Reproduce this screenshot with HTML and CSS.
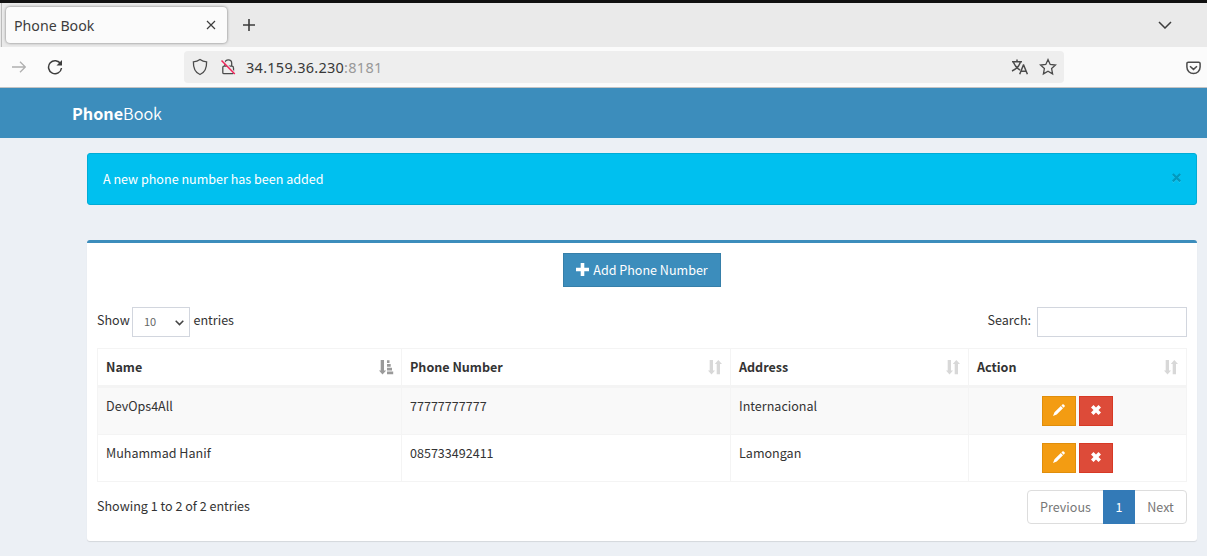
FILE: index.html
```html
<!DOCTYPE html>
<html lang="en">
<head>
<meta charset="utf-8">
<title>Phone Book</title>
<link rel="stylesheet" href="styles.css">
</head>
<body>
<svg class="defs" width="0" height="0" aria-hidden="true">
  <symbol id="sort" viewBox="0 0 14 15"><path d="M1.700 0h3.300v10.500h2L3.500 14.500 0 10.500h1.700zM8.700 14.300h3.300V4h2L10.300 0 6.800 4h1.900z"/></symbol>
  <symbol id="sort-asc" viewBox="0 0 15 15"><path d="M1.700 0h3.300v10.500h2.200L3.500 14.500 0 10.500h1.700zM8 .2h2.500v2.700H8zM8 4h3.700v2.700H8zM8 7.700h5v2.800H8zM8 11.400h6.200v2.800H8z"/></symbol>
  <symbol id="pencil" viewBox="0 0 12 12"><path d="M9.300.5q.8-.6 1.500.1l.7.700q.6.700 0 1.500l-.9.900-2.200-2.200zM7.800 2.100 10 4.300 3.700 10.500 0 12l1.500-3.700z"/></symbol>
  <symbol id="remove" viewBox="0 0 10 10"><path d="M2.500 0 5 2.500 7.500 0 10 2.500 7.500 5 10 7.500 7.500 10 5 7.500 2.500 10 0 7.500 2.500 5 0 2.500z"/></symbol>
</svg>
<div class="window-edge"></div>
<div class="tabs">
  <div class="tab"><span>Phone Book</span>
    <svg class="tab-close" width="10" height="10" viewBox="0 0 10 10"><path d="M1 1l8 8M9 1l-8 8"/></svg>
  </div>
  <svg class="new-tab" width="12" height="12" viewBox="0 0 12 12"><path d="M6 0v12M0 6h12"/></svg>
  <svg class="tab-list" width="14" height="8" viewBox="0 0 14 8"><path d="M1 1l6 6 6-6"/></svg>
</div>
<div class="toolbar">
  <svg class="forward" width="14" height="12" viewBox="0 0 14 12"><path d="M0 6h13M8 .7 13.300 6 8 11.300"/></svg>
  <svg class="reload" width="16" height="16" viewBox="0 0 16 16"><path d="M13.700 5A6.500 6.500 0 1 0 14.500 9"/><path class="solid" d="M15 1v5.500H9.500z"/></svg>
  <div class="address">
    <svg class="shield" width="16" height="18" viewBox="0 0 16 18"><path d="M8 1.500c2 1.500 4.300 2.200 6.600 2.300C14.800 9.500 13 14.500 8 16.500 3 14.500 1.200 9.500 1.400 3.800 3.700 3.700 6 3 8 1.500z"/></svg>
    <svg class="lock" width="16" height="18" viewBox="0 0 16 18"><path d="M4.900 8V5.200a3.400 3.400 0 0 1 6.800 0v3M4 8.200h7.700q1.800 0 1.800 1.800v4.500q0 1.200-1.200 1.200H4q-1.200 0-1.200-1.200v-5q0-1.300 1.200-1.300z"/><path class="slash-gap" d="M2.500 2.500 15.500 16"/><path class="slash" d="M1.500 2.500 14.800 16"/></svg>
    <span class="url">34.159.36.230<span>:8181</span></span>
    <svg class="translate" width="17" height="16" viewBox="0 0 17 16"><path d="M1 2.800h10M6 .5v2.300M2.500 3.500C4 7 6.500 9.500 9 11M9.300 3.500C8 7.500 5 10.300 1 12M8.700 15.200 12.400 6h.2l3.800 9.200M10 12.200h5.200"/></svg>
    <svg class="star" width="18" height="18" viewBox="0 0 18 18"><path d="M9 1.600 11.200 6.400 16.500 7 12.600 10.600 13.600 15.900 9 13.300 4.400 15.900 5.400 10.600 1.500 7 6.800 6.400z"/></svg>
  </div>
  <svg class="pocket" width="15" height="14" viewBox="0 0 15 14"><path d="M2.300 1.200h10.400q1.400 0 1.400 1.400V6a6.600 6.600 0 0 1-13.200 0V2.600q0-1.400 1.400-1.400zM4 5.200l3.500 3.200L11 5.200"/></svg>
</div>
<header class="navbar"><span class="brand"><b>Phone</b><span>Book</span></span></header>
<main class="content">
  <div class="alert"><span>A new phone number has been added</span>
    <svg class="dismiss" width="9" height="10" viewBox="0 0 9 10"><path class="glow" d="M.8 2l7.400 7.400M8.200 2 .8 9.400"/><path d="M.8 1l7.400 7.400M8.200 1 .8 8.400"/></svg>
  </div>
  <section class="box">
    <button class="add"><svg width="13" height="13" viewBox="0 0 13 13"><path d="M4.700 0h3.600v4.700H13v3.600H8.300V13H4.700V8.300H0V4.700h4.700z"/></svg><span>Add Phone Number</span></button>
    <div class="filters">
      <div class="length"><span class="show">Show</span><div class="select"><span>10</span><svg width="9" height="6" viewBox="0 0 9 6"><path d="M.7.7 4.500 4.600 8.300.7"/></svg></div><span class="entries">entries</span></div>
      <label class="search"><span>Search:</span><input type="text"></label>
    </div>
    <table>
      <colgroup><col class="c-name"><col class="c-phone"><col class="c-address"><col class="c-action"></colgroup>
      <thead><tr>
        <th><div><span>Name</span><svg class="sorted" width="15" height="15"><use href="#sort-asc"/></svg></div></th>
        <th><div><span>Phone Number</span><svg width="14" height="15"><use href="#sort"/></svg></div></th>
        <th><div><span>Address</span><svg width="14" height="15"><use href="#sort"/></svg></div></th>
        <th><div><span>Action</span><svg width="14" height="15"><use href="#sort"/></svg></div></th>
      </tr></thead>
      <tbody>
        <tr><td>DevOps4All</td><td>77777777777</td><td>Internacional</td><td><div class="actions"><button class="edit"><svg width="12" height="12"><use href="#pencil"/></svg></button><button class="delete"><svg width="10" height="10"><use href="#remove"/></svg></button></div></td></tr>
        <tr><td>Muhammad Hanif</td><td>085733492411</td><td>Lamongan</td><td><div class="actions"><button class="edit"><svg width="12" height="12"><use href="#pencil"/></svg></button><button class="delete"><svg width="10" height="10"><use href="#remove"/></svg></button></div></td></tr>
      </tbody>
    </table>
    <div class="footer">
      <span class="info">Showing 1 to 2 of 2 entries</span>
      <div class="pages"><span class="prev">Previous</span><span class="current">1</span><span class="next">Next</span></div>
    </div>
  </section>
</main>
</body>
</html>
```
FILE: styles.css
```css
* { box-sizing: border-box; }
body {
  margin: 0;
  height: 556px;
  overflow: hidden;
  background: #ecf0f5;
  color: #333;
  font: 12.55px/20px "Noto Sans CJK SC", sans-serif;
}
svg { display: block; flex: none; fill: none; }
button, input { font: inherit; margin: 0; padding: 0; border-radius: 0; }
.defs { position: absolute; }

.window-edge { height: 3px; background: #111; }
.tabs {
  display: flex; align-items: center; height: 44px; padding-left: 6px;
  background: linear-gradient(to right, #eaeaea 1px, #bbb 1px, #bbb 2px, #eaeaea 2px);
  font: 14.2px/20px "Noto Sans", sans-serif; color: #3d3d3d;
}
.tab {
  display: flex; align-items: center; justify-content: space-between;
  width: 221px; height: 36px; padding: 0 11px 0 8px; margin-right: 16px;
  background: #fbfbfb; border-radius: 4px; box-shadow: 0 0 3px rgba(0,0,0,.5);
}
.tab span { padding-top: 2px; }
.tab-close, .new-tab, .tab-list { stroke: #3d3d3d; stroke-width: 1.2; }
.new-tab { stroke-width: 1.6; }
.tab-list { margin-left: auto; margin-right: 35px; stroke-width: 1.5; }

.toolbar {
  display: flex; align-items: center; height: 41px; padding-left: 12px;
  background: #fbfbfb; border-bottom: 1px solid #c3c3c3;
}
.forward { stroke: #b0b0b0; stroke-width: 1.3; margin-right: 21px; }
.reload { stroke: #3d3d3d; stroke-width: 1.5; }
.solid { fill: #3d3d3d; stroke: none; }
.address {
  display: flex; align-items: center; width: 880px; height: 32px;
  margin-left: 121px; padding: 0 7px 0 8px; background: #eee; border-radius: 4px;
}
.shield, .lock, .translate, .star, .pocket { stroke: #4b4b4b; stroke-width: 1.3; }
.lock { margin-left: 12px; }
.lock .slash { stroke: #f0245a; stroke-width: 1.5; }
.lock .slash-gap { stroke: #eee; stroke-width: 2; }
.url { margin-left: 10px; font: 14.5px/20px "Noto Sans", sans-serif; letter-spacing: .27px; color: #383838; }
.url span { color: #999; }
.translate { margin-left: auto; margin-right: 11px; stroke-width: 1.5; }
.pocket { margin-left: 121.500px; margin-top: 1px; stroke-width: 1.5; }

.navbar { display: flex; align-items: center; height: 50px; padding-left: 72px; background: #3c8dbc; color: #fff; }
.brand { font-size: 16.2px; line-height: 24px; }
.brand span { font-weight: 350; }

.content { padding: 15px 10px 0 87px; }
.alert {
  display: flex; align-items: center; justify-content: space-between;
  height: 52px; margin-bottom: 35px; padding: 0 15px;
  background: #00c0ef; border: 1px solid #00acd6; border-radius: 3px; color: #fff;
}
.dismiss { stroke: #0299be; stroke-width: 2.3; margin-top: -2px; }
.dismiss .glow { stroke: #33cdf2; stroke-width: 1.5; }

.box {
  height: 301px; padding: 10px; background: #fff; border-top: 3px solid #3c8dbc;
  border-radius: 3px; box-shadow: 0 1px 1px rgba(0,0,0,.1);
}
.add {
  display: flex; align-items: center; justify-content: center; gap: 4px;
  width: 158px; height: 34px; margin: 0 auto 20px;
  background: #3c8dbc; border: 1px solid #367fa9; color: #fff;
}
.add svg { fill: #fff; margin-top: -1px; }
.filters { display: flex; justify-content: space-between; height: 30px; margin-bottom: 11px; }
.length { display: flex; }
.length > span, .search span { line-height: 26px; }
.show { width: 35px; }
.select {
  display: flex; align-items: center; justify-content: space-between;
  width: 58px; height: 30px; padding: 0 5px 1px 11px; border: 1px solid #d2d6de;
  font-size: 11px; color: #666;
}
.select span { padding-bottom: 1px; }
.select svg { stroke: #444; stroke-width: 1.5; margin-top: 2px; }
.entries { margin-left: 3.500px; }
.search { display: flex; gap: 6px; }
.search input { width: 150px; height: 30px; border: 1px solid #d2d6de; background: #fff; }

table {
  width: 1090px; table-layout: fixed; border-collapse: separate; border-spacing: 0;
  border: solid #f4f4f4; border-width: 1px 0 0 1px;
}
.c-name { width: 304px; }
.c-phone { width: 329px; }
.c-address { width: 238px; }
.c-action { width: 218px; }
th, td { padding: 8px; border: solid #f4f4f4; border-width: 0 1px 1px 0; text-align: left; vertical-align: top; }
th { height: 39px; border-bottom-width: 3px; font-weight: 700; }
th:first-child { padding-right: 7px; }
th div { display: flex; align-items: center; justify-content: space-between; height: 20px; }
th svg { fill: #d8d8d8; }
th .sorted { fill: #9a9a9a; }
td { height: 47px; }
tbody tr:first-child { background: #f9f9f9; }
.actions { display: flex; justify-content: center; gap: 3px; }
.actions button { display: flex; align-items: center; justify-content: center; width: 34px; height: 30px; }
.actions svg { fill: #fff; margin-top: -2px; }
.edit { background: #f39c12; border: 1px solid #e08e0b; }
.delete { background: #dd4b39; border: 1px solid #d73925; }

.footer { display: flex; justify-content: space-between; padding-top: 8px; }
.info { line-height: 32px; }
.pages { display: flex; width: 160px; height: 34px; border: 1px solid #ddd; border-radius: 4px; color: #777; line-height: 32px; text-align: center; }
.prev { width: 75px; }
.current { width: 32px; height: 34px; margin-top: -1px; background: #337ab7; color: #fff; line-height: 34px; }
.next { flex: 1; }
```
